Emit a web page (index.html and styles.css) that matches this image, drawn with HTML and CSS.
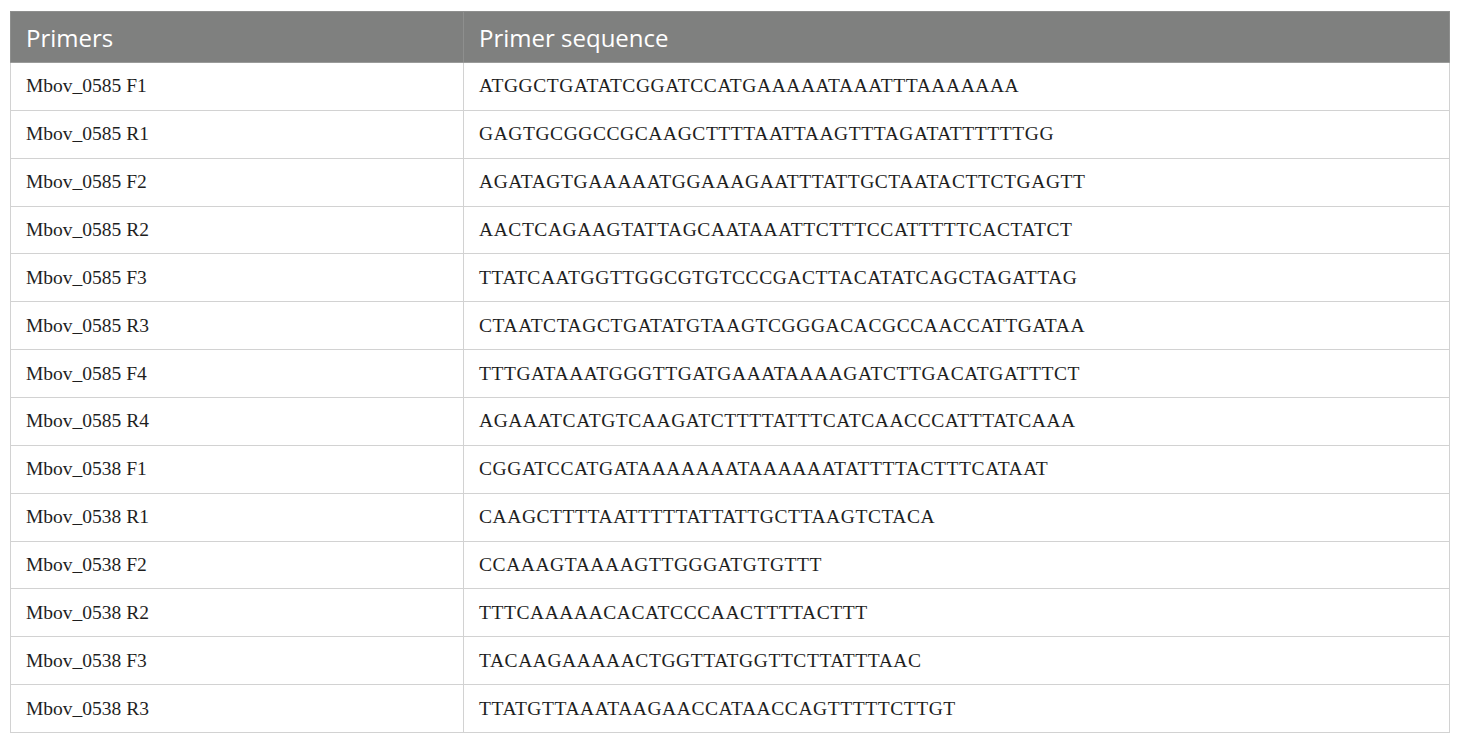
FILE: index.html
```html
<!DOCTYPE html>
<html>
<head>
<meta charset="utf-8">
<link rel="stylesheet" href="styles.css">
</head>
<body>
<table class="primers">
  <thead>
    <tr><th class="col-name">Primers</th><th>Primer sequence</th></tr>
  </thead>
  <tbody>
    <tr><td>Mbov_0585 F1</td><td class="seq">ATGGCTGATATCGGATCCATGAAAAATAAATTTAAAAAAA</td></tr>
    <tr><td>Mbov_0585 R1</td><td class="seq">GAGTGCGGCCGCAAGCTTTTAATTAAGTTTAGATATTTTTTGG</td></tr>
    <tr><td>Mbov_0585 F2</td><td class="seq">AGATAGTGAAAAATGGAAAGAATTTATTGCTAATACTTCTGAGTT</td></tr>
    <tr><td>Mbov_0585 R2</td><td class="seq">AACTCAGAAGTATTAGCAATAAATTCTTTCCATTTTTCACTATCT</td></tr>
    <tr><td>Mbov_0585 F3</td><td class="seq">TTATCAATGGTTGGCGTGTCCCGACTTACATATCAGCTAGATTAG</td></tr>
    <tr><td>Mbov_0585 R3</td><td class="seq">CTAATCTAGCTGATATGTAAGTCGGGACACGCCAACCATTGATAA</td></tr>
    <tr><td>Mbov_0585 F4</td><td class="seq">TTTGATAAATGGGTTGATGAAATAAAAGATCTTGACATGATTTCT</td></tr>
    <tr><td>Mbov_0585 R4</td><td class="seq">AGAAATCATGTCAAGATCTTTTATTTCATCAACCCATTTATCAAA</td></tr>
    <tr><td>Mbov_0538 F1</td><td class="seq">CGGATCCATGATAAAAAAATAAAAAATATTTTACTTTCATAAT</td></tr>
    <tr><td>Mbov_0538 R1</td><td class="seq">CAAGCTTTTAATTTTTATTATTGCTTAAGTCTACA</td></tr>
    <tr><td>Mbov_0538 F2</td><td class="seq">CCAAAGTAAAAGTTGGGATGTGTTT</td></tr>
    <tr><td>Mbov_0538 R2</td><td class="seq">TTTCAAAAACACATCCCAACTTTTACTTT</td></tr>
    <tr><td>Mbov_0538 F3</td><td class="seq">TACAAGAAAAACTGGTTATGGTTCTTATTTAAC</td></tr>
    <tr><td>Mbov_0538 R3</td><td class="seq">TTATGTTAAATAAGAACCATAACCAGTTTTTCTTGT</td></tr>
  </tbody>
</table>
</body>
</html>
```
FILE: styles.css
```css
html, body {
  margin: 0;
  padding: 0;
  background: #ffffff;
}
body {
  padding: 11px 0 0 10px;
}
.primers {
  border-collapse: collapse;
  width: 1440px;
  table-layout: fixed;
}
.primers th,
.primers td {
  border: 1px solid #d2d2d2;
  text-align: left;
  vertical-align: middle;
  padding: 0 0 0 15px;
}
.primers th {
  background: #7f807f;
  color: #ffffff;
  font-family: "Open Sans", "Noto Sans", sans-serif;
  font-weight: 400;
  font-size: 24px;
  height: 50px;
  border-color: #8e8f8e;
  border-bottom-color: #9a9b9a;
}
.primers .col-name {
  width: 437px;
}
.primers td {
  font-family: "Liberation Serif", "Times New Roman", serif;
  font-size: 19.5px;
  color: #1e1e1e;
  height: 46.86px;
}
.primers td.seq {
  letter-spacing: 0.57px;
}
```
